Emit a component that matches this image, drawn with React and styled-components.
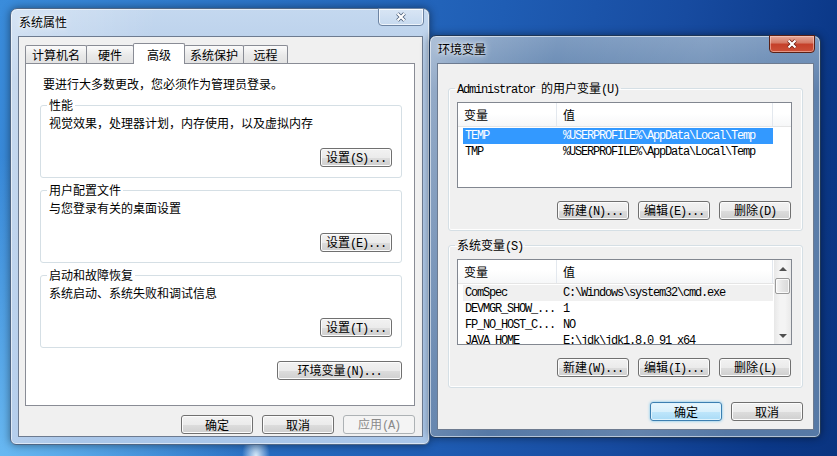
import styled, { createGlobalStyle, css } from 'styled-components'

const CJK = `"Noto Sans CJK SC", "Liberation Sans", sans-serif`
const MONO = `"Liberation Mono", "Noto Sans CJK SC", monospace`

const GlobalStyle = createGlobalStyle`
  * {
    box-sizing: border-box;
  }
  html, body {
    margin: 0;
    padding: 0;
  }
  body {
    overflow: hidden;
    font-family: ${CJK};
    font-size: 12px;
    color: #000;
  }
`

// data
const userVars = [
  { name: 'TEMP', value: '%USERPROFILE%\\AppData\\Local\\Temp', selected: true },
  { name: 'TMP', value: '%USERPROFILE%\\AppData\\Local\\Temp' },
]

const sysVars = [
  { name: 'ComSpec', value: 'C:\\Windows\\system32\\cmd.exe', idle: true },
  { name: 'DEVMGR_SHOW_...', value: '1' },
  { name: 'FP_NO_HOST_C...', value: 'NO' },
  { name: 'JAVA_HOME', value: 'E:\\jdk\\jdk1.8.0_91_x64' },
]

const tabs = [
  { label: '计算机名', w: 62 },
  { label: '硬件', w: 48 },
  { label: '高级', w: 52, active: true },
  { label: '系统保护', w: 60 },
  { label: '远程', w: 45 },
]

const groups = [
  { title: '性能', text: '视觉效果，处理器计划，内存使用，以及虚拟内存', button: '设置(S)...' },
  { title: '用户配置文件', text: '与您登录有关的桌面设置', button: '设置(E)...' },
  { title: '启动和故障恢复', text: '系统启动、系统失败和调试信息', button: '设置(T)...' },
]

const Desktop = styled.div`
  position: relative;
  width: 837px;
  height: 456px;
  overflow: hidden;
  background:
    radial-gradient(ellipse 14px 22px at 256px 456px, rgba(235, 248, 255, 0.9), rgba(235, 248, 255, 0) 100%),
    radial-gradient(ellipse 260px 300px at 0 456px, rgba(110, 190, 245, 0.9), rgba(110, 190, 245, 0) 100%),
    linear-gradient(100deg, #3a8cdb 0%, #2a72c6 30%, #1f5db4 55%, #174ba0 75%, #0b3888 92%, #0a3480 100%);
`

const Window = styled.section`
  position: absolute;
  left: ${(p) => p.$x}px;
  top: ${(p) => p.$y}px;
  width: ${(p) => p.$w}px;
  height: ${(p) => p.$h}px;
  display: flex;
  flex-direction: column;
  border-radius: 7px 7px 6px 6px;
  border: 1px solid ${(p) => (p.$active ? '#1d3657' : '#4f6684')};
  box-shadow: inset 0 0 0 1px rgba(255, 255, 255, 0.55), 0 0 9px rgba(0, 0, 0, 0.45);
  background: ${(p) =>
    p.$active
      ? `linear-gradient(100deg, rgba(255,255,255,0.38) 0%, rgba(255,255,255,0.12) 14%, rgba(255,255,255,0) 28%, rgba(255,255,255,0.08) 60%, rgba(255,255,255,0) 80%),
         linear-gradient(#7e9cc1 0%, #5f81ac 14%, #5679a6 100%)`
      : `linear-gradient(100deg, rgba(255,255,255,0.3) 0%, rgba(255,255,255,0) 30%),
         linear-gradient(#c4d8ef 0%, #b3cbe8 16%, #a9c6e9 100%)`};
`

const TitleBar = styled.header`
  display: flex;
  align-items: flex-start;
  height: 27px;
  padding-left: 8px;
`

const Title = styled.div`
  margin-top: 6px;
  line-height: 14px;
  font-size: 12px;
  text-shadow: 0 0 7px rgba(255, 255, 255, 0.95), 0 0 3px rgba(255, 255, 255, 0.8);
`

const CloseButton = styled.div`
  margin: -1px 5px 0 auto;
  width: 46px;
  height: 18px;
  display: flex;
  align-items: center;
  justify-content: center;
  border-radius: 0 0 4px 4px;
  ${(p) =>
    p.$active
      ? css`
          border: 1px solid #5a2116;
          background: linear-gradient(#e6a797 0%, #d57a66 42%, #c5402a 52%, #cc5139 100%);
          box-shadow: inset 0 0 0 1px rgba(255, 220, 210, 0.5);
        `
      : css`
          border: 1px solid #6d84a3;
          background: linear-gradient(rgba(255, 255, 255, 0.35), rgba(255, 255, 255, 0.1));
          box-shadow: inset 0 0 0 1px rgba(255, 255, 255, 0.7);
        `}
`

const Client = styled.div`
  flex: 1;
  min-height: 0;
  margin: 0 6px 7px 7px;
  display: flex;
  flex-direction: column;
  background: #f0f0f0;
  border: 1px solid rgba(38, 60, 92, 0.65);
`

const SysBody = styled.div`
  display: flex;
  flex-direction: column;
  padding: 6px 7px 0 6px;
`

const TabRow = styled.div`
  position: relative;
  z-index: 1;
  display: flex;
  align-items: flex-end;
  height: 20px;
`

const Tab = styled.div`
  position: relative;
  width: ${(p) => p.$w}px;
  height: ${(p) => (p.$active ? 21 : 18)}px;
  margin-left: -1px;
  margin-bottom: ${(p) => (p.$active ? -1 : 0)}px;
  display: flex;
  align-items: center;
  justify-content: center;
  border: 1px solid #898c95;
  border-bottom: none;
  border-radius: 2px 2px 0 0;
  background: ${(p) => (p.$active ? '#fff' : 'linear-gradient(#fbfbfb, #e9e9e9 55%, #e2e2e2)')};
  z-index: ${(p) => (p.$active ? 2 : 0)};

  &:first-child {
    margin-left: 0;
  }
`

const TabPanel = styled.div`
  height: 343px;
  display: flex;
  flex-direction: column;
  padding: 13px 12px 0 14px;
  background: #fff;
  border: 1px solid #898c95;
`

const Intro = styled.p`
  margin: 0 0 0 3px;
  line-height: 14px;
`

const Group = styled.fieldset`
  margin: ${(p) => p.$gap}px 0 0;
  padding: 0;
  border: 1px solid #d5dfe5;
  border-radius: 3px;
  box-shadow: inset 0 0 0 1px rgba(255, 255, 255, 0.9);
  min-width: 0;
`

const Legend = styled.legend`
  height: 14px;
  margin-left: 6px;
  padding: 0 2px;
  line-height: 14px;
  white-space: nowrap;
`

const GroupBody = styled.div`
  display: flex;
  flex-direction: column;
  padding: ${(p) => p.$pad};
`

const GroupText = styled.div`
  line-height: 14px;
`

const ButtonRow = styled.div`
  display: flex;
  justify-content: flex-end;
  gap: 9px;
  margin-top: ${(p) => p.$top || 0}px;
  padding-right: ${(p) => p.$right || 0}px;
`

const Button = styled.button`
  width: ${(p) => p.$w || 72}px;
  height: 19px;
  padding: 0;
  border: 1px solid #707070;
  border-radius: 3px;
  font-family: ${CJK};
  font-size: 12px;
  line-height: 16px;
  color: #000;
  white-space: nowrap;
  background: linear-gradient(#f2f2f2 0%, #ebebeb 50%, #dddddd 51%, #cfcfcf 100%);
  box-shadow: inset 0 0 0 1px #fcfcfc;

  ${(p) =>
    p.$primary &&
    css`
      border-color: #3c7fb1;
      background: linear-gradient(#e8f6fd 0%, #d8f0fc 50%, #bfe6fb 51%, #a9dbf6 100%);
      box-shadow: inset 0 0 0 1px #dff3fd, 0 0 3px #6ac1ee;
    `}

  &:disabled {
    border-color: #adb2b5;
    background: #f4f4f4;
    box-shadow: none;
    color: #8a8a8a;
  }
`

const Ascii = styled.span`
  font-family: ${MONO};
  font-size: 12px;
  letter-spacing: -1.2px;
`

// splits a label into CJK runs and monospace ascii runs, like SimSun draws them
const Txt = ({ children }) =>
  String(children)
    .split(/([\x20-\x7e]+)/)
    .filter(Boolean)
    .map((part, i) => (/^[\x20-\x7e]+$/.test(part) ? <Ascii key={i}>{part}</Ascii> : part))

const EnvBody = styled.div`
  display: flex;
  flex-direction: column;
  padding: 17px 10px 0 10px;
`

const ListBox = styled.div`
  display: flex;
  height: 86px;
  border: 1px solid #828790;
  background: #fff;
  overflow: hidden;
`

const ListMain = styled.div`
  flex: 1;
  min-width: 0;
  display: flex;
  flex-direction: column;
  overflow: hidden;
`

const Header = styled.div`
  display: flex;
  flex: none;
  height: 24px;
  border-bottom: 1px solid #e5e5e5;
  background: linear-gradient(#ffffff 0%, #ffffff 45%, #f6f7f8 100%);
`

const HeadCell = styled.div`
  flex: none;
  width: ${(p) => p.$w}px;
  padding-left: 6px;
  line-height: 23px;
  border-right: 1px solid #e3e8ee;
`

const Fill = styled.div`
  flex: 1;
`

const Rows = styled.div`
  padding-top: 1px;
`

const Row = styled.div`
  display: flex;
  width: 310px;
  height: 16px;
  margin-left: 5px;
  line-height: 16px;
  font-family: ${MONO};
  font-size: 12px;
  letter-spacing: -1.2px;
  white-space: nowrap;
  color: ${(p) => (p.$selected ? '#fff' : '#000')};
  background: ${(p) => (p.$selected ? '#3399ff' : p.$idle ? '#f0f0f0' : 'transparent')};
`

const Cell = styled.div`
  flex: none;
  width: ${(p) => p.$w}px;
  padding-left: ${(p) => p.$pad}px;
  overflow: hidden;
`

const ScrollBar = styled.div`
  flex: none;
  width: 17px;
  display: flex;
  flex-direction: column;
  background: linear-gradient(to right, #e7e7e7, #f4f4f4 35%, #f4f4f4 65%, #e9e9e9);
`

const ScrollArrow = styled.div`
  height: 17px;
  display: flex;
  align-items: center;
  justify-content: center;

  &::after {
    content: '';
    border-left: 4px solid transparent;
    border-right: 4px solid transparent;
    ${(p) => (p.$down ? 'border-top: 4px solid #505050;' : 'border-bottom: 4px solid #505050;')}
  }
`

const Thumb = styled.div`
  height: 16px;
  margin: 1px 1px 0;
  border: 1px solid #9a9a9a;
  border-radius: 2px;
  background: linear-gradient(to right, #f6f6f6, #e4e4e4 50%, #d9d9d9);
  box-shadow: inset 0 0 0 1px rgba(255, 255, 255, 0.8);
`

const CloseGlyph = ({ shade }) => (
  <svg width="12" height="10" viewBox="0 0 12 10">
    <path d="M2.5 1.5 L9.5 8.5 M9.5 1.5 L2.5 8.5" stroke={shade} strokeWidth="3.8" />
    <path d="M2.5 1.5 L9.5 8.5 M9.5 1.5 L2.5 8.5" stroke="#fff" strokeWidth="2.2" />
  </svg>
)

const VarList = ({ rows, scroll }) => (
  <ListBox>
    <ListMain>
      <Header>
        <HeadCell $w={99}>变量</HeadCell>
        <HeadCell $w={216}>值</HeadCell>
        <Fill />
      </Header>
      <Rows>
        {rows.map((r) => (
          <Row key={r.name} $selected={r.selected} $idle={r.idle}>
            <Cell $w={94} $pad={2}>{r.name}</Cell>
            <Cell $w={216} $pad={6}>{r.value}</Cell>
          </Row>
        ))}
      </Rows>
    </ListMain>
    {scroll && (
      <ScrollBar>
        <ScrollArrow />
        <Thumb />
        <Fill />
        <ScrollArrow $down />
      </ScrollBar>
    )}
  </ListBox>
)

const VarGroup = ({ title, rows, buttons, gap, scroll }) => (
  <Group $gap={gap}>
    <Legend><Txt>{title}</Txt></Legend>
    <GroupBody $pad="7px 10px 10px 8px">
      <VarList rows={rows} scroll={scroll} />
      <ButtonRow $top={13} $right={1}>
        {buttons.map((b) => (
          <Button key={b}><Txt>{b}</Txt></Button>
        ))}
      </ButtonRow>
    </GroupBody>
  </Group>
)

const App = () => {
  return (
    <>
      <GlobalStyle />
      <Desktop>
        <Window $x={10} $y={8} $w={420} $h={437}>
          <TitleBar>
            <Title>系统属性</Title>
            <CloseButton>
              <CloseGlyph shade="#4a5d78" />
            </CloseButton>
          </TitleBar>
          <Client>
            <SysBody>
              <TabRow>
                {tabs.map((t) => (
                  <Tab key={t.label} $w={t.w} $active={t.active}>{t.label}</Tab>
                ))}
              </TabRow>
              <TabPanel>
                <Intro>要进行大多数更改，您必须作为管理员登录。</Intro>
                {groups.map((g, i) => (
                  <Group key={g.title} $gap={i === 0 ? 7 : 5}>
                    <Legend>{g.title}</Legend>
                    <GroupBody $pad="4px 9px 10px 8px">
                      <GroupText>{g.text}</GroupText>
                      <ButtonRow $top={18}>
                        <Button><Txt>{g.button}</Txt></Button>
                      </ButtonRow>
                    </GroupBody>
                  </Group>
                ))}
                <ButtonRow $top={13}>
                  <Button $w={125}><Txt>环境变量(N)...</Txt></Button>
                </ButtonRow>
              </TabPanel>
              <ButtonRow $top={9}>
                <Button>确定</Button>
                <Button>取消</Button>
                <Button disabled><Txt>应用(A)</Txt></Button>
              </ButtonRow>
            </SysBody>
          </Client>
        </Window>

        <Window $active $x={429} $y={35} $w={392} $h={403}>
          <TitleBar>
            <Title>环境变量</Title>
            <CloseButton $active>
              <CloseGlyph shade="#6e1a0e" />
            </CloseButton>
          </TitleBar>
          <Client>
            <EnvBody>
              <VarGroup
                title="Administrator 的用户变量(U)"
                rows={userVars}
                buttons={['新建(N)...', '编辑(E)...', '删除(D)']}
                gap={0}
              />
              <VarGroup
                title="系统变量(S)"
                rows={sysVars}
                buttons={['新建(W)...', '编辑(I)...', '删除(L)']}
                gap={7}
                scroll
              />
              <ButtonRow $top={14}>
                <Button $primary>确定</Button>
                <Button>取消</Button>
              </ButtonRow>
            </EnvBody>
          </Client>
        </Window>
      </Desktop>
    </>
  )
}

export default App
